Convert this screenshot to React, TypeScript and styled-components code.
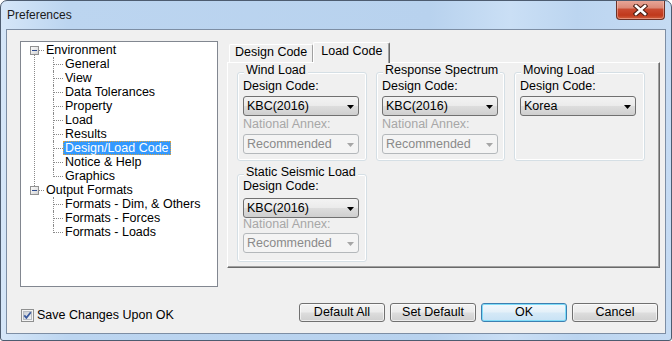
import React from 'react';
import styled, { createGlobalStyle } from 'styled-components';

const FONT = `"Liberation Sans", Arial, sans-serif`;

const GlobalStyle = createGlobalStyle`
  html, body { margin: 0; padding: 0; background: #ffffff; }
  #root { width: 672px; height: 341px; }
  * { box-sizing: border-box; }
`;

const Window = styled.div`
  width: 672px;
  height: 341px;
  display: flex;
  flex-direction: column;
  border: 1px solid #4d5c70;
  border-radius: 7px 7px 3px 3px;
  background: linear-gradient(
    to right,
    #d5e6f8 0%,
    #bcd5f0 10%,
    #b8d2ee 64%,
    #cadff5 76%,
    #bcd5f0 86%,
    #c5dbf3 100%
  );
  font-family: ${FONT};
  overflow: hidden;
`;

const TitleBar = styled.div`
  height: 28px;
  flex: none;
  display: flex;
  align-items: flex-start;
  justify-content: space-between;
  padding: 0 6px 0 6px;
`;

const TitleText = styled.div`
  margin-top: 6px;
  font-size: 12px;
  line-height: 16px;
  color: #1a1a1a;
`;

const CloseButton = styled.div`
  margin-top: -1px;
  width: 49px;
  height: 20px;
  display: flex;
  align-items: center;
  justify-content: center;
  border: 1px solid #6b3227;
  border-top: none;
  border-radius: 0 0 4px 4px;
  background: linear-gradient(#e9a99b 0%, #dc8a78 40%, #c94a30 50%, #c0391c 80%, #d0603f 100%);
  box-shadow: inset 0 0 0 1px rgba(255, 210, 200, 0.45);
`;

const Client = styled.div`
  flex: 1;
  margin: 0 5px 6px 5px;
  border: 1px solid #7d8ea4;
  background: #f0f0f0;
  display: flex;
  flex-direction: column;
  padding: 11px 5px 0 13px;
  font-size: 12.5px;
  color: #000;
`;

const MainRow = styled.div`
  display: flex;
  gap: 9px;
  align-items: flex-start;
`;

/* ---------- Tree ---------- */

const TreeBox = styled.div`
  width: 198px;
  height: 246px;
  flex: none;
  border: 1px solid #828790;
  background: #ffffff;
  padding-top: 1px;
`;

const RootNode = styled.div<{ $hasNext: boolean }>`
  position: relative;
  &::before {
    content: '';
    display: ${p => (p.$hasNext ? 'block' : 'none')};
    position: absolute;
    left: 13px;
    top: 12px;
    bottom: -3px;
    border-left: 1px dotted #8a8a8a;
  }
`;

const RootRow = styled.div`
  height: 14px;
  display: flex;
  align-items: center;
  padding-left: 9px;
`;

const Expander = styled.svg`
  display: block;
  flex: none;
`;

const RootDots = styled.span`
  width: 5px;
  flex: none;
  border-top: 1px dotted #8a8a8a;
`;

const ChildRow = styled.div<{ $last: boolean }>`
  position: relative;
  height: 14px;
  display: flex;
  align-items: center;
  padding-left: 42px;
  &::before {
    content: '';
    position: absolute;
    left: 32px;
    top: 0;
    height: ${p => (p.$last ? '8px' : '14px')};
    border-left: 1px dotted #8a8a8a;
  }
  &::after {
    content: '';
    position: absolute;
    left: 33px;
    top: 7px;
    width: 9px;
    border-top: 1px dotted #8a8a8a;
  }
`;

const NodeLabel = styled.span<{ $selected?: boolean }>`
  display: inline-block;
  height: 14px;
  line-height: 12px;
  padding: 0 1px;
  white-space: nowrap;
  border: 1px ${p => (p.$selected ? 'dotted #d9a040' : 'solid transparent')};
  background: ${p => (p.$selected ? '#3399ff' : 'transparent')};
  color: ${p => (p.$selected ? '#ffffff' : '#000000')};
`;

/* ---------- Tabs ---------- */

const TabControl = styled.div`
  flex: 1;
  margin-top: 1px;
  display: flex;
  flex-direction: column;
`;

const TabStrip = styled.div`
  height: 20px;
  display: flex;
  align-items: flex-end;
  padding-left: 2px;
`;

const Tab = styled.div<{ $active?: boolean }>`
  position: relative;
  z-index: ${p => (p.$active ? 1 : 0)};
  height: ${p => (p.$active ? '21px' : '18px')};
  margin-bottom: ${p => (p.$active ? '-1px' : '0')};
  padding: ${p => (p.$active ? '1px 7px 0 7px' : '0 5px')};
  line-height: 14px;
  white-space: nowrap;
  background: #f0f0f0;
  border-top: 1px solid #ffffff;
  border-left: 1px solid #ffffff;
  border-right: 1px solid ${p => (p.$active ? '#696969' : '#a0a0a0')};
  border-radius: 2px 2px 0 0;
  box-shadow: ${p => (p.$active ? 'inset -1px 0 0 #a0a0a0' : 'none')};
`;

const Panel = styled.div`
  height: 206px;
  border-top: 1px solid #ffffff;
  border-left: 1px solid #ffffff;
  border-right: 1px solid #696969;
  border-bottom: 1px solid #696969;
  box-shadow: inset -1px -1px 0 #a0a0a0;
  background: #f0f0f0;
  padding: 3px 14px 0 9px;
`;

const GroupRow = styled.div`
  display: flex;
  justify-content: space-between;
  align-items: stretch;
`;

const Group = styled.fieldset<{ $top?: number; $bottom: number; $width: number }>`
  margin: ${p => p.$top ?? 0}px 0 0 0;
  min-width: 0;
  width: ${p => p.$width}px;
  border: 1px solid #d5dfe5;
  border-radius: 3px;
  box-shadow: inset 0 0 0 1px #ffffff;
  padding: 0 ${p => p.$width - 123}px ${p => p.$bottom}px 5px;
`;

const Legend = styled.legend`
  margin-left: 1px;
  padding: 0 2px 5px 2px;
  font-size: 12.5px;
  line-height: 8px;
  white-space: nowrap;
  background: #f0f0f0;
`;

const FieldLabel = styled.div<{ $top: number; $disabled?: boolean }>`
  margin-top: ${p => p.$top}px;
  height: 14px;
  line-height: 14px;
  white-space: nowrap;
  color: ${p => (p.$disabled ? '#a7a7a7' : '#000000')};
`;

const Combo = styled.div<{ $top: number; $disabled?: boolean }>`
  margin-top: ${p => p.$top}px;
  height: 20px;
  display: flex;
  align-items: center;
  justify-content: space-between;
  padding: 0 4px 0 3px;
  line-height: 18px;
  border: 1px solid ${p => (p.$disabled ? '#b4b8bb' : '#707070')};
  border-radius: 3px;
  background: ${p =>
    p.$disabled
      ? '#f4f4f4'
      : 'linear-gradient(#f3f3f3 0%, #ebebeb 48%, #dddddd 52%, #cfcfcf 100%)'};
  color: ${p => (p.$disabled ? '#8a8a8a' : '#000000')};
  white-space: nowrap;
`;

const Arrow = styled.svg`
  display: block;
  flex: none;
  margin-top: 2px;
`;

/* ---------- Footer ---------- */

const Footer = styled.div`
  margin-top: 16px;
  display: flex;
  align-items: flex-start;
`;

const CheckLabel = styled.label`
  margin-top: 5px;
  margin-left: 1px;
  height: 14px;
  display: flex;
  align-items: center;
  gap: 3px;
  line-height: 14px;
  white-space: nowrap;
`;

const ButtonRow = styled.div`
  margin-left: auto;
  margin-right: 2px;
  display: flex;
  gap: 5px;
`;

const Button = styled.div<{ $default?: boolean }>`
  width: 86px;
  height: 19px;
  border: 1px solid ${p => (p.$default ? '#3c7fb1' : '#707070')};
  border-radius: 3px;
  background: ${p =>
    p.$default
      ? 'linear-gradient(#f2f8fc 0%, #e4f0f9 48%, #d5e9f7 52%, #c8e2f5 100%)'
      : 'linear-gradient(#f3f3f3 0%, #ebebeb 48%, #dddddd 52%, #cfcfcf 100%)'};
  box-shadow: ${p => (p.$default ? 'inset 0 0 0 1px #7fdcf8' : 'inset 0 0 0 1px rgba(255,255,255,0.6)')};
  text-align: center;
  line-height: 17px;
  white-space: nowrap;
`;

/* ---------- Pieces ---------- */

const ExpanderIcon = () => (
  <Expander width="9" height="9" viewBox="0 0 9 9">
    <defs>
      <linearGradient id="expg" x1="0" y1="0" x2="1" y2="1">
        <stop offset="0" stopColor="#ffffff" />
        <stop offset="1" stopColor="#cfcfcf" />
      </linearGradient>
    </defs>
    <rect x="0.5" y="0.5" width="8" height="8" fill="url(#expg)" stroke="#919191" />
    <rect x="2" y="4" width="5" height="1" fill="#2d4b8e" />
  </Expander>
);

const DropArrow = ({ disabled }: { disabled?: boolean }) => (
  <Arrow width="7" height="4" viewBox="0 0 7 4">
    <path d="M0 0 H7 L3.5 4 Z" fill={disabled ? '#a6a6a6' : '#000000'} />
  </Arrow>
);

const CloseIcon = () => (
  <svg width="15" height="12" viewBox="0 0 15 12" style={{ display: 'block' }}>
    <path d="M3 2 L12 10 M12 2 L3 10" stroke="#4a1d12" strokeWidth="4.6" strokeLinecap="square" />
    <path d="M3 2 L12 10 M12 2 L3 10" stroke="#ffffff" strokeWidth="2.6" strokeLinecap="square" />
  </svg>
);

const CheckIcon = () => (
  <svg width="13" height="13" viewBox="0 0 13 13" style={{ display: 'block', flex: 'none' }}>
    <defs>
      <linearGradient id="chkg" x1="0" y1="0" x2="1" y2="1">
        <stop offset="0" stopColor="#c6cbd2" />
        <stop offset="1" stopColor="#f7f7f7" />
      </linearGradient>
    </defs>
    <rect x="0.5" y="0.5" width="12" height="12" fill="#f4f4f4" stroke="#8e8f8f" />
    <rect x="2.5" y="2.5" width="8" height="8" fill="url(#chkg)" stroke="#b9bdc3" />
    <path d="M3.3 6.4 L5.4 8.8 L9.8 3.3" fill="none" stroke="#3a5a9e" strokeWidth="1.8" />
  </svg>
);

const treeData = [
  {
    label: 'Environment',
    children: [
      'General',
      'View',
      'Data Tolerances',
      'Property',
      'Load',
      'Results',
      'Design/Load Code',
      'Notice & Help',
      'Graphics',
    ],
  },
  {
    label: 'Output Formats',
    children: ['Formats - Dim, & Others', 'Formats - Forces', 'Formats - Loads'],
  },
];

const SELECTED = 'Design/Load Code';

type CodeGroupProps = {
  title: string;
  code: string;
  width?: number;
  annex?: boolean;
  compact?: boolean;
  top?: number;
};

const CodeGroup = ({ title, code, width = 130, annex = true, compact = false, top }: CodeGroupProps) => (
  <Group $top={top} $bottom={compact ? 8 : 6} $width={width}>
    <Legend>{title}</Legend>
    <FieldLabel $top={compact ? -2 : 0}>Design Code:</FieldLabel>
    <Combo $top={compact ? 5 : 3}>
      <span>{code}</span>
      <DropArrow />
    </Combo>
    {annex && (
      <>
        <FieldLabel $top={compact ? -1 : 1} $disabled>
          National Annex:
        </FieldLabel>
        <Combo $top={compact ? 2 : 3} $disabled>
          <span>Recommended</span>
          <DropArrow disabled />
        </Combo>
      </>
    )}
  </Group>
);

export default function App() {
  return (
    <>
      <GlobalStyle />
      <Window>
        <TitleBar>
          <TitleText>Preferences</TitleText>
          <CloseButton>
            <CloseIcon />
          </CloseButton>
        </TitleBar>
        <Client>
          <MainRow>
            <TreeBox>
              {treeData.map((node, i) => (
                <RootNode key={node.label} $hasNext={i < treeData.length - 1}>
                  <RootRow>
                    <ExpanderIcon />
                    <RootDots />
                    <NodeLabel>{node.label}</NodeLabel>
                  </RootRow>
                  {node.children.map((c, j) => (
                    <ChildRow key={c} $last={j === node.children.length - 1}>
                      <NodeLabel $selected={c === SELECTED}>{c}</NodeLabel>
                    </ChildRow>
                  ))}
                </RootNode>
              ))}
            </TreeBox>
            <TabControl>
              <TabStrip>
                <Tab>Design Code</Tab>
                <Tab $active>Load Code</Tab>
              </TabStrip>
              <Panel>
                <GroupRow>
                  <CodeGroup title="Wind Load" code="KBC(2016)" width={130} />
                  <CodeGroup title="Response Spectrum" code="KBC(2016)" width={129} />
                  <CodeGroup title="Moving Load" code="Korea" annex={false} width={131} />
                </GroupRow>
                <CodeGroup title="Static Seismic Load" code="KBC(2016)" compact top={7} />
              </Panel>
            </TabControl>
          </MainRow>
          <Footer>
            <CheckLabel>
              <CheckIcon />
              Save Changes Upon OK
            </CheckLabel>
            <ButtonRow>
              <Button>Default All</Button>
              <Button>Set Default</Button>
              <Button $default>OK</Button>
              <Button>Cancel</Button>
            </ButtonRow>
          </Footer>
        </Client>
      </Window>
    </>
  );
}
